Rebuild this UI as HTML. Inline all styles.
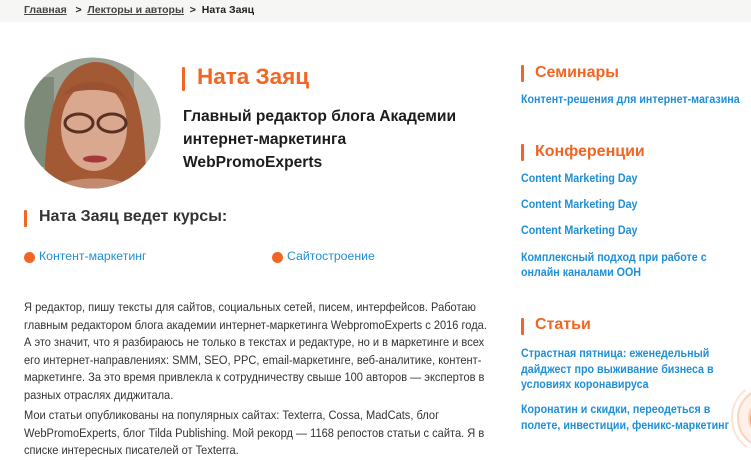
<!DOCTYPE html>
<html><head><meta charset="utf-8"><style>
*{margin:0;padding:0;box-sizing:border-box}
body{width:751px;height:447px;overflow:hidden;background:#fff;font-family:"Liberation Sans",sans-serif;position:relative;color:#222}
.a{position:absolute;white-space:nowrap}
.bc{position:absolute;left:0;top:0;width:751px;height:22px;background:#f6f6f5}
.bc span{font-size:10.5px;font-weight:bold;color:#222}
.bc u{color:#444}
.bar{position:absolute;width:3px;background:#f26522;border-radius:1px}
.or{color:#f26522;font-weight:bold}
.bl{color:#1f8fd6;font-size:11.5px;font-weight:bold;transform:scaleX(0.93);transform-origin:left top}
.p{position:absolute;left:24px;font-size:12.3px;line-height:17.6px;color:#333;white-space:nowrap}
.p div{transform:scaleX(0.9);transform-origin:left top}
.dot{position:absolute;width:11px;height:11px;border-radius:50%;background:#f26522}
</style></head><body>
<div class="bc"><span class="a" style="left:24px;top:4px"><u>Главная</u>&nbsp;&nbsp; &gt; &nbsp;<u>Лекторы и авторы</u>&nbsp; &gt; &nbsp;Ната Заяц</span></div>

<svg class="a" style="left:24px;top:57px" width="137" height="132" viewBox="0 0 137 132">
<defs><clipPath id="c"><ellipse cx="68.5" cy="66" rx="68" ry="65.5"/></clipPath></defs>
<g clip-path="url(#c)">
<rect width="137" height="132" fill="#9aa395"/>
<rect x="0" y="20" width="30" height="90" fill="#7d8a78"/>
<rect x="110" y="10" width="30" height="100" fill="#b9bfb4"/>
<path d="M20 132 C22 60 30 10 70 5 C110 5 122 50 122 132 Z" fill="#a35a34"/>
<ellipse cx="70" cy="70" rx="33" ry="44" fill="#d9a88f"/>
<path d="M38 40 C45 20 95 18 104 45 C95 30 50 30 38 40Z" fill="#9b5232"/>
<ellipse cx="55" cy="66" rx="14" ry="9" fill="none" stroke="#5b3024" stroke-width="3"/>
<ellipse cx="88" cy="66" rx="14" ry="9" fill="none" stroke="#5b3024" stroke-width="3"/>
<ellipse cx="71" cy="102" rx="12" ry="3.5" fill="#a4383a"/>
<path d="M30 132 C40 118 100 118 112 132Z" fill="#c48a70"/>
</g></svg>

<div class="bar" style="left:182px;top:67px;height:24px"></div>
<div class="a or" style="left:197px;top:64px;font-size:22.5px">Ната Заяц</div>
<div class="a" style="left:183px;top:105px;font-size:15.6px;line-height:23px;font-weight:bold;color:#1c1c1c">Главный редактор блога Академии<br>интернет-маркетинга<br>WebPromoExperts</div>

<div class="bar" style="left:24px;top:210px;height:17px"></div>
<div class="a" style="left:39px;top:208px;font-size:16px;font-weight:bold;color:#333">Ната Заяц ведет курсы:</div>
<div class="dot" style="left:24px;top:252px"></div>
<div class="a" style="left:39px;top:249px;font-size:12.3px;color:#1f8fd6">Контент-маркетинг</div>
<div class="dot" style="left:272px;top:252px"></div>
<div class="a" style="left:287px;top:249px;font-size:12.3px;color:#1f8fd6">Сайтостроение</div>

<div class="p" style="top:299px">
<div>Я редактор, пишу тексты для сайтов, социальных сетей, писем, интерфейсов. Работаю</div>
<div>главным редактором блога академии интернет-маркетинга WebpromoExperts с 2016 года.</div>
<div>А это значит, что я разбираюсь не только в текстах и редактуре, но и в маркетинге и всех</div>
<div>его интернет-направлениях: SMM, SEO, PPC, email-маркетинге, веб-аналитике, контент-</div>
<div>маркетинге. За это время привлекла к сотрудничеству свыше 100 авторов — экспертов в</div>
<div>разных отраслях диджитала.</div>
</div>
<div class="p" style="top:407px">
<div>Мои статьи опубликованы на популярных сайтах: Texterra, Cossa, MadCats, блог</div>
<div>WebPromoExperts, блог Tilda Publishing. Мой рекорд — 1168 репостов статьи с сайта. Я в</div>
<div>списке интересных писателей от Texterra.</div>
</div>

<div class="bar" style="left:521px;top:65px;height:17px"></div>
<div class="a or" style="left:535px;top:64px;font-size:16px">Семинары</div>
<div class="a bl" style="left:521px;top:94px">Контент-решения для интернет-магазина</div>

<div class="bar" style="left:521px;top:144px;height:17px"></div>
<div class="a or" style="left:535px;top:143px;font-size:16px">Конференции</div>
<div class="a bl" style="left:521px;top:173px">Content Marketing Day</div>
<div class="a bl" style="left:521px;top:199px">Content Marketing Day</div>
<div class="a bl" style="left:521px;top:225px">Content Marketing Day</div>
<div class="a bl" style="left:521px;top:251px;line-height:15px">Комплексный подход при работе с<br>онлайн каналами ООН</div>

<div class="bar" style="left:521px;top:318px;height:17px"></div>
<div class="a or" style="left:535px;top:316px;font-size:16px">Статьи</div>
<div class="a bl" style="left:521px;top:347px;line-height:15.5px">Страстная пятница: еженедельный<br>дайджест про выживание бизнеса в<br>условиях коронавируса</div>
<div class="a bl" style="left:521px;top:403px;line-height:15.5px">Коронатин и скидки, переодеться в<br>полете, инвестиции, феникс-маркетинг</div>

<svg class="a" style="left:730px;top:390px" width="21" height="57"><circle cx="38" cy="28" r="36" fill="none" stroke="#fde3d3" stroke-width="2"/><circle cx="38" cy="28" r="30" fill="#fff1e8" stroke="#fbd3bb" stroke-width="2"/><circle cx="38" cy="28" r="20" fill="#fbd0b4"/><circle cx="36" cy="30" r="16" fill="#f7a070"/></svg>
</body></html>
